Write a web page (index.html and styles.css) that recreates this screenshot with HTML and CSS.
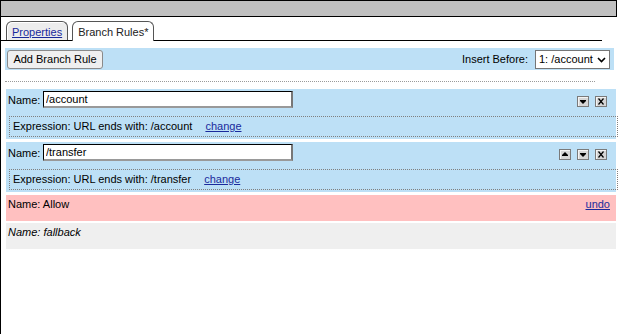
FILE: index.html
```html
<!DOCTYPE html>
<html>
<head>
<meta charset="utf-8">
<link rel="stylesheet" href="styles.css">
</head>
<body>
<div class="frame">
  <div class="titlebar"></div>
  <div class="tabs">
    <div class="tab"><a href="#">Properties</a></div>
    <div class="tab active">Branch Rules*</div>
  </div>
  <div class="toolbar">
    <button class="btn">Add Branch Rule</button>
    <div class="insert">
      <span>Insert Before:</span>
      <div class="sel-wrap">
        <select class="sel"><option>1: /account</option><option>2: /transfer</option></select>
        <svg class="chev" width="9" height="6" viewBox="0 0 9 6"><path d="M1 1 L4.5 4.5 L8 1" stroke="#000" stroke-width="1.6" fill="none"/></svg>
      </div>
    </div>
  </div>
  <div class="sep"></div>
  <div class="rules">
    <div class="rule">
      <div class="name-row">
        <span class="lbl">Name:</span>
        <input class="name-input" type="text" value="/account">
        <div class="ctrls">
          <span class="ibtn"><svg width="10" height="9" viewBox="0 0 10 9"><rect x="2" y="3" width="6" height="1" fill="#000"/><polygon points="2,4 8,4 5,7" fill="#000"/></svg></span>
          <span class="ibtn"><svg width="10" height="9" viewBox="0 0 10 9"><path d="M2.5 1.5 L7.5 7.5 M7.5 1.5 L2.5 7.5" stroke="#000" stroke-width="1.2" fill="none"/></svg></span>
        </div>
      </div>
      <div class="expr">Expression: URL ends with: /account <a href="#" class="chg">change</a></div>
    </div>
    <div class="rule">
      <div class="name-row">
        <span class="lbl">Name:</span>
        <input class="name-input" type="text" value="/transfer">
        <div class="ctrls">
          <span class="ibtn"><svg width="10" height="9" viewBox="0 0 10 9"><polygon points="5,2 8,5 2,5" fill="#000"/><rect x="2" y="5" width="6" height="1" fill="#000"/></svg></span>
          <span class="ibtn"><svg width="10" height="9" viewBox="0 0 10 9"><rect x="2" y="3" width="6" height="1" fill="#000"/><polygon points="2,4 8,4 5,7" fill="#000"/></svg></span>
          <span class="ibtn"><svg width="10" height="9" viewBox="0 0 10 9"><path d="M2.5 1.5 L7.5 7.5 M7.5 1.5 L2.5 7.5" stroke="#000" stroke-width="1.2" fill="none"/></svg></span>
        </div>
      </div>
      <div class="expr">Expression: URL ends with: /transfer <a href="#" class="chg">change</a></div>
    </div>
    <div class="deleted">
      <span>Name: Allow</span>
      <a href="#" class="undo">undo</a>
    </div>
    <div class="fallback">Name: fallback</div>
  </div>
</div>
</body>
</html>
```

FILE: styles.css
```css
html, body {
  margin: 0;
  padding: 0;
  background: #fff;
}
body {
  font-family: "Liberation Sans", Arial, sans-serif;
  font-size: 11px;
  color: #000;
}
.frame {
  border-left: 1px solid #000;
  min-height: 334px;
  box-sizing: border-box;
}
.titlebar {
  margin-left: -1px;
  width: 615px;
  height: 15px;
  background: #c0c0c0;
  border: 1px solid #000;
}
.tabs {
  display: flex;
  gap: 4px;
  margin-top: 4px;
  padding-left: 5px;
  width: 596px;
  height: 19px;
  border-bottom: 1px solid #000;
}
.tab {
  height: 18px;
  padding: 0 5px;
  border: 1px solid #555;
  border-bottom: none;
  border-radius: 6px 6px 0 0;
  background: #ececec;
  line-height: 20px;
  box-shadow: inset 1px 1px 0 #fff;
}
.tab a {
  color: #1a2a9c;
  text-decoration: underline;
}
.tab.active {
  background: #fff;
  height: 19px;
  margin-bottom: -1px;
  color: #222;
}
.toolbar {
  margin: 7px 0 0 4px;
  width: 609px;
  height: 22px;
  background: #bde0f6;
  display: flex;
  align-items: center;
  justify-content: space-between;
  padding: 0 4px 0 2px;
  box-sizing: border-box;
}
.btn {
  font-family: inherit;
  font-size: 11px;
  height: 19px;
  width: 96px;
  padding: 0;
  border: 1px solid #8a8a8a;
  border-radius: 3px;
  background: #efefef;
  color: #000;
}
.insert {
  display: flex;
  align-items: center;
  gap: 7px;
}
.sel-wrap {
  position: relative;
  display: flex;
}
.sel {
  font-family: inherit;
  font-size: 11px;
  height: 19px;
  width: 75px;
  border: 1px solid #767676;
  background: #fff;
  color: #000;
  padding: 0 0 0 3px;
  appearance: none;
  -webkit-appearance: none;
  border-radius: 0;
}
.chev {
  position: absolute;
  right: 4px;
  top: 7px;
  pointer-events: none;
}
.sep {
  margin: 11px 0 0 4px;
  width: 590px;
  border-top: 1px dotted #9a9a9a;
}
.rules {
  margin: 7px 0 0 5px;
  width: 610px;
}
.rule {
  background: #bde0f6;
  height: 50px;
  box-sizing: border-box;
  padding: 2px 0 0 2px;
  margin-bottom: 3px;
}
.name-row {
  display: flex;
  align-items: center;
  height: 17px;
}
.lbl {
  width: 35px;
}
.name-input {
  font-family: inherit;
  font-size: 11px;
  width: 250px;
  height: 17px;
  box-sizing: border-box;
  padding: 0 2px;
  margin: 0;
  border-style: solid;
  border-width: 1px 2px 2px 1px;
  border-color: #000 #777 #999 #000;
  background: #fff;
  outline: none;
}
.ctrls {
  margin-left: auto;
  margin-right: 9px;
  display: flex;
  gap: 6px;
  padding-top: 3px;
}
.ibtn {
  width: 10px;
  height: 9px;
  border: 1px solid #7a7a7a;
  background: #d6d6d6;
  box-shadow: inset 1px 1px 0 #f4f4f4;
  display: flex;
}
.expr {
  margin: 8px -2px 0 1px;
  height: 21px;
  box-sizing: border-box;
  border: 1px dotted #808080;
  padding-left: 3px;
  line-height: 19px;
  white-space: nowrap;
}
.chg {
  margin-left: 10px;
  color: #1a2a9c;
  text-decoration: underline;
}
.deleted {
  background: #ffc0c0;
  height: 26px;
  box-sizing: border-box;
  padding: 3px 6px 0 2px;
  display: flex;
  justify-content: space-between;
  align-items: flex-start;
  margin-bottom: 2px;
}
.undo {
  color: #1a2a9c;
  text-decoration: underline;
  font-size: 11px;
}
.fallback {
  background: #efefef;
  height: 26px;
  box-sizing: border-box;
  padding: 3px 2px 0 2px;
  font-style: italic;
}
```
